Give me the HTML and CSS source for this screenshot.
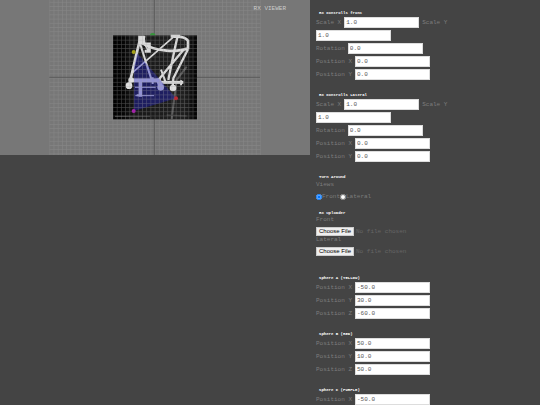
FILE: index.html
```html
<!DOCTYPE html>
<html lang="en">
<head>
    <meta charset="UTF-8">
    <meta name="viewport" content="width=device-width, initial-scale=1.0">
    <title>RX Viewer</title>
    <link rel="stylesheet" href="styles.css">
</head>
<body>
    <main class="viewer">
        <svg class="scene" viewBox="0 0 930 465" aria-hidden="true">
            <defs>
                <pattern id="grid" x="148" y="5.4" width="12.64" height="12.64" patternUnits="userSpaceOnUse">
                    <path d="M0 1H12.64M1 0V12.64" stroke="#a8a8a8" stroke-width="2"/>
                </pattern>
                <linearGradient id="film">
                    <stop offset="0" stop-color="#000"/>
                    <stop offset="0.12" stop-color="#050505"/>
                    <stop offset="0.25" stop-color="#181818"/>
                    <stop offset="0.85" stop-color="#202020"/>
                    <stop offset="1" stop-color="#000"/>
                </linearGradient>
            </defs>
            <rect x="148" y="0" width="634" height="465" fill="url(#grid)" opacity="0.3"/>
            <path d="M148 232H780M463 0V465" stroke="#5c5c5c" stroke-width="3"/>
            <rect x="339" y="106" width="252" height="252" fill="url(#film)"/>
            <path d="M560 200L530 240L515 357" fill="none" stroke="#555" stroke-width="6"/>
            <path d="M345 349H450M500 345L560 348" fill="none" stroke="#3a3a3a" stroke-width="4"/>
            <!-- frame -->
            <g fill="none" stroke="#dadada" stroke-width="8">
                <path d="M422 110L404 185L389 250"/>
                <path d="M420 130L456 244" stroke-width="6"/>
                <path d="M428 130Q455 148 500 152Q540 155 564 145V122Q555 108 520 110"/>
                <path d="M434 108Q428 125 446 154M519 112L395 220" stroke-width="5"/>
                <path d="M532 112Q520 165 505 240M550 150L475 240M564 148L520 235L518 260" stroke-width="7"/>
                <path d="M424 107V134" stroke-width="19"/>
                <path d="M432 132H448V154H434M512 109H540" stroke-width="9"/>
                <path d="M390 241H480" stroke-width="12"/>
                <path d="M480 247H550" stroke-width="9"/>
                <path d="M421 245V290" stroke-width="10"/>
                <path d="M410 286H426M483 209L496 244M543 241V256M458 232V252" stroke-width="6"/>
                <path d="M405 262H467M406 287H462" stroke-width="3"/>
                <path d="M474 235L482 260" stroke-width="14"/>
            </g>
            <g fill="#e0e0e0">
                <circle cx="387" cy="257" r="10"/>
                <circle cx="482" cy="262" r="10"/>
                <circle cx="519" cy="264" r="10"/>
                <circle cx="393" cy="240" r="8"/>
            </g>
            <!-- plane through the three spheres -->
            <path d="M412 160L528 295L402 333V200Z" fill="#2222c8" opacity="0.4"/>
            <rect x="339" y="106" width="252" height="252" fill="url(#grid)" opacity="0.4"/>
            <path d="M450 106A8 7 0 0 1 466 106Z" fill="#37953c"/>
            <circle cx="401" cy="156" r="6" fill="#a5a019"/>
            <circle cx="528" cy="295" r="6" fill="#b82d35"/>
            <circle cx="401" cy="333" r="6" fill="#a324a8"/>
        </svg>
        <h1 class="viewer-title">RX VIEWER</h1>
    </main>

    <form class="controls">
        <fieldset class="group">
            <legend>RX Controlls front</legend>
            <div class="row">
                <label for="front-scale-x">Scale X</label>
                <input type="text" id="front-scale-x" value="1.0">
                <label for="front-scale-y">Scale Y</label>
                <input type="text" id="front-scale-y" value="1.0">
            </div>
            <div class="row">
                <label for="front-rotation">Rotation</label>
                <input type="text" id="front-rotation" value="0.0">
            </div>
            <div class="row">
                <label for="front-x">Position X</label>
                <input type="text" id="front-x" value="0.0">
            </div>
            <div class="row">
                <label for="front-y">Position Y</label>
                <input type="text" id="front-y" value="0.0">
            </div>
        </fieldset>

        <fieldset class="group">
            <legend>RX Controlls Lateral</legend>
            <div class="row">
                <label for="lateral-scale-x">Scale X</label>
                <input type="text" id="lateral-scale-x" value="1.0">
                <label for="lateral-scale-y">Scale Y</label>
                <input type="text" id="lateral-scale-y" value="1.0">
            </div>
            <div class="row">
                <label for="lateral-rotation">Rotation</label>
                <input type="text" id="lateral-rotation" value="0.0">
            </div>
            <div class="row">
                <label for="lateral-x">Position X</label>
                <input type="text" id="lateral-x" value="0.0">
            </div>
            <div class="row">
                <label for="lateral-y">Position Y</label>
                <input type="text" id="lateral-y" value="0.0">
            </div>
        </fieldset>

        <fieldset class="group views">
            <legend>Turn Around</legend>
            <p class="caption">Views</p>
            <div class="radios">
                <input type="radio" id="view-front" name="view" checked>
                <label for="view-front">Front</label>
                <input type="radio" id="view-lateral" name="view">
                <label for="view-lateral">Lateral</label>
            </div>
        </fieldset>

        <fieldset class="group uploader">
            <legend>RX uploader</legend>
            <label class="caption" for="file-front">Front</label>
            <input type="file" id="file-front">
            <label class="caption" for="file-lateral">Lateral</label>
            <input type="file" id="file-lateral">
        </fieldset>

        <fieldset class="group">
            <legend>Sphere A (YELLOW)</legend>
            <div class="row">
                <label for="a-x">Position X</label>
                <input type="text" id="a-x" value="-50.0">
            </div>
            <div class="row">
                <label for="a-y">Position Y</label>
                <input type="text" id="a-y" value="30.0">
            </div>
            <div class="row">
                <label for="a-z">Position Z</label>
                <input type="text" id="a-z" value="-60.0">
            </div>
        </fieldset>

        <fieldset class="group">
            <legend>Sphere B (RED)</legend>
            <div class="row">
                <label for="b-x">Position X</label>
                <input type="text" id="b-x" value="50.0">
            </div>
            <div class="row">
                <label for="b-y">Position Y</label>
                <input type="text" id="b-y" value="10.0">
            </div>
            <div class="row">
                <label for="b-z">Position Z</label>
                <input type="text" id="b-z" value="50.0">
            </div>
        </fieldset>

        <fieldset class="group">
            <legend>Sphere C (PURPLE)</legend>
            <div class="row">
                <label for="c-x">Position X</label>
                <input type="text" id="c-x" value="-50.0">
            </div>
        </fieldset>
    </form>
</body>
</html>
```
FILE: styles.css
```css
* {
    box-sizing: border-box;
}
body {
    margin: 0;
    display: grid;
    grid-template-columns: 31fr 23fr;
    align-items: start;
    background-color: #444;
    color: #7c7c7c;
    font-family: "Liberation Mono", "Courier New", monospace;
    font-size: 6px;
    line-height: 8px;
}
.viewer {
    position: relative;
    background-color: #777;
}
.scene {
    display: block;
    width: 100%;
}
.viewer-title {
    position: absolute;
    top: 5px;
    right: 24px;
    margin: 0;
    color: #ccc;
    font-size: 6px;
    font-weight: normal;
}
.controls {
    padding: 10px 24px 0 6px;
}
.group {
    min-width: 0;
    margin: 0 0 11px;
    padding: 0;
    border: 0;
}
.group legend {
    padding: 0 3px;
    color: #fff;
    font-size: 4px;
    font-weight: bold;
    line-height: 6px;
}
.row {
    display: flex;
    flex-wrap: wrap;
    align-items: center;
    column-gap: 3px;
}
.row input {
    width: 75px;
    height: 11px;
    margin: 1px 0;
    padding: 0 1px;
    border: 1px solid #ddd;
    background-color: #fff;
    color: #555;
    font: inherit;
}
.caption {
    display: block;
    margin: 0;
    padding-top: 1px;
}
.views {
    margin-bottom: 9px;
}
.radios {
    display: flex;
    align-items: center;
    margin-top: 4px;
}
.radios input {
    width: 6px;
    height: 6px;
    margin: 0;
}
.uploader {
    margin-bottom: 19px;
}
.uploader .caption {
    padding-top: 0;
}
.uploader input {
    display: block;
    width: 100%;
    height: 9px;
    margin-top: 3px;
    color: #666;
    font: inherit;
}
.uploader input::file-selector-button {
    height: 9px;
    margin: 0 2px 0 0;
    padding: 0 2px;
    border: 1px solid #ccc;
    background-color: #efefef;
    color: #000;
    font-family: "Liberation Sans", Arial, sans-serif;
    font-size: 6px;
    line-height: 7px;
}
```
